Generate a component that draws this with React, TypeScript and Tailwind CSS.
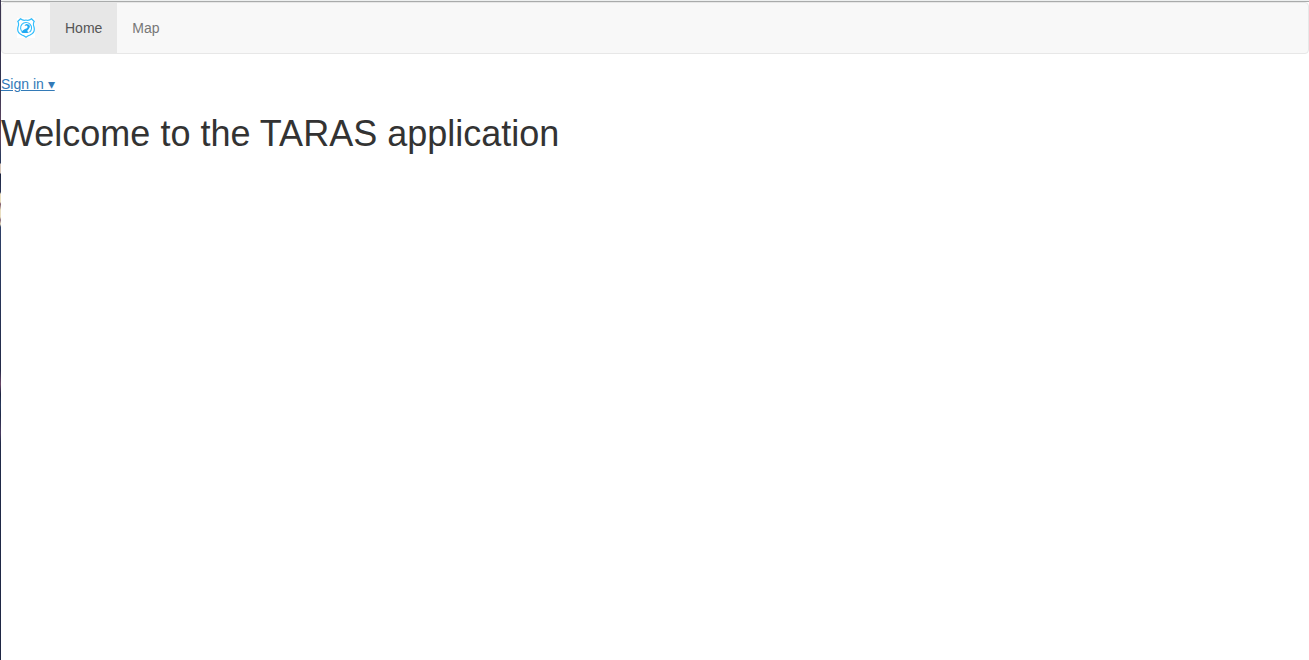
function ShieldLogo() {
  return (
    <svg viewBox="0 0 36 40" className="h-5 w-[18px] bg-white" fill="none" stroke="#33bdfb" aria-hidden="true">
      <path
        d="M7 1.500 Q12 6 18 4 Q24 6 29 1.500 L34.500 7 Q31.500 11 34 18 Q37 29 26 34 Q21 36 18 38.500 Q15 36 10 34 Q-1 29 2 18 Q4.500 11 1.500 7 Z"
        strokeWidth="2.400"
        strokeLinejoin="round"
      />
      <path d="M12 29 A11 11 0 1 1 25 28.500" strokeWidth="2.200" />
      <path
        d="M9 29 Q10 24 16 22 Q22 20 21 17 Q20 14 15 16 Q17 10 23 13 Q28 16 24 21 Q22 24 20 26 L24 29 Q17 31 9 29 Z"
        fill="#22aaf2"
        stroke="none"
      />
    </svg>
  );
}

export default function App() {
  return (
    <div className="flex min-h-screen bg-white font-['Liberation_Sans',Arial,sans-serif] text-sm leading-5 text-[#333]">
      <div
        aria-hidden="true"
        className="w-px shrink-0 bg-[linear-gradient(to_bottom,#3b3550_0px,#3b3550_50px,#2f3350_80px,#6a4a63_135px,#2c3a5c_155px,#2c3a5c_163px,#d8c8bc_164px,#d8c8bc_173px,#1c2440_174px,#2a3558_192px,#eadfc0_194px,#eadfc0_202px,#7c5668_204px,#eadfc0_210px,#eadfc0_217px,#8a6a7c_220px,#eadfc0_224px,#2f4068_227px,#2a3a60_260px,#232a48_370px,#6b4668_384px,#1c2440_394px,#26385c_405px,#1f2a48_415px,#4a3a60_433px,#202a48_443px,#1f2744_660px)]"
      />
      <div className="min-w-0 grow border-t border-[#eef0f0]">
        <div className="border-t border-[#a9abab]">
          <nav className="mb-5 flex rounded border border-[#e7e7e7] bg-[#f8f8f8]" aria-label="Main">
            <a href="#home" aria-label="TARAS" className="p-[15px]">
              <ShieldLogo />
            </a>
            <a href="#home" aria-current="page" className="bg-[#e7e7e7] p-[15px] text-[#555]">
              Home
            </a>
            <a href="#map" className="p-[15px] text-[#777]">
              Map
            </a>
          </nav>
          <a href="#sign-in" className="block w-fit text-[#337ab7] underline">
            Sign in ▾
          </a>
          <h1 className="mt-5 text-4xl font-normal">Welcome to the TARAS application</h1>
        </div>
      </div>
    </div>
  );
}
